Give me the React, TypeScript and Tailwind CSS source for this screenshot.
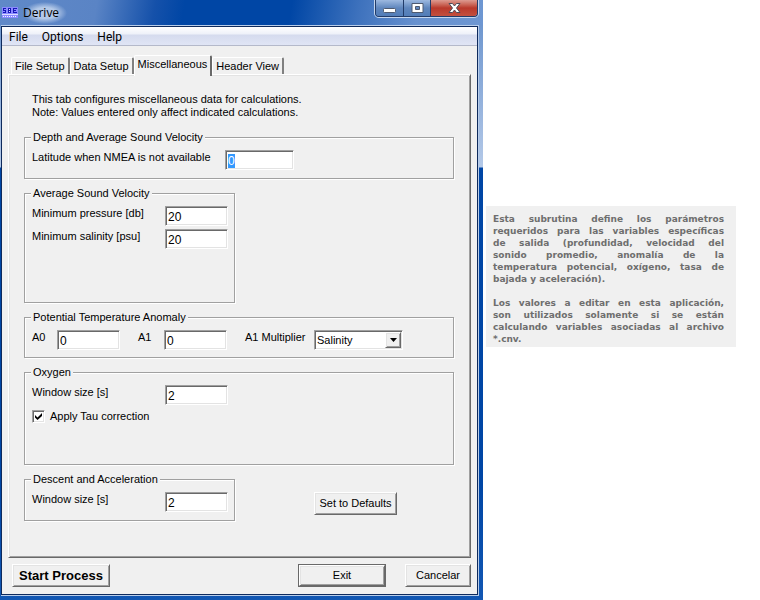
import { useEffect, useId, useRef } from "react";
import type { ReactNode } from "react";

const sunken =
  "rounded-none border border-t-[#a0a0a0] border-l-[#a0a0a0] border-r-white border-b-white shadow-[inset_1px_1px_0_#696969,inset_-1px_-1px_0_#e3e3e3]";
const raised =
  "border border-t-white border-l-white border-r-[#696969] border-b-[#696969] shadow-[inset_1px_1px_0_#e3e3e3,inset_-1px_-1px_0_#a0a0a0]";

function Group({ title, className, children }: { title: string; className: string; children: ReactNode }) {
  return (
    <fieldset
      className={`min-w-0 border border-[#a0a0a0] px-[7px] shadow-[1px_1px_0_#fff,inset_1px_1px_0_#fff] ${className}`}
    >
      <legend className="-ml-px bg-[#f0f0f0] px-0.5 leading-[13px]">{title}</legend>
      <div className="pt-1.5">{children}</div>
    </fieldset>
  );
}

function Field({ label, value, selected }: { label: string; value: string; selected?: boolean }) {
  const id = useId();
  const ref = useRef<HTMLInputElement>(null);
  useEffect(() => {
    if (selected) {
      ref.current?.focus();
      ref.current?.select();
    }
  }, [selected]);
  return (
    <>
      <label htmlFor={id} className="pt-px whitespace-nowrap">
        {label}
      </label>
      <input
        id={id}
        ref={ref}
        defaultValue={value}
        className={`h-5 w-full bg-white px-0.5 pt-0.5 text-[12px] leading-[13px] outline-none selection:bg-[#3399ff] selection:text-white ${sunken}`}
      />
    </>
  );
}

function Tab({ children, active }: { children: ReactNode; active?: boolean }) {
  return (
    <button
      role="tab"
      aria-selected={!!active}
      className={`rounded-t-[2px] border-t border-l border-white px-[3px] whitespace-nowrap ${
        active
          ? "relative z-10 -mb-0.5 h-[21px] border-r-2 border-r-[#696969] bg-[#f0f0f0] pb-1"
          : "h-[17px] border-r-2 border-r-[#808080]"
      }`}
    >
      {children}
    </button>
  );
}

function AppIcon() {
  return (
    <svg width="16" height="11" viewBox="0 0 16 11" shapeRendering="crispEdges" aria-hidden="true">
      <rect width="16" height="11" fill="#8a8aff" />
      <path d="M1 1h3v1H2v1h2v3H1V5h2V4H1zM6 1h3v5H6zM11 1h4v1h-3v1h2v1h-2v1h3v1h-4z" fill="#1717b5" />
      <path d="M7 2h1v1H7zM7 4h1v1H7zM0 7h16v1H0z" fill="#dcdcff" />
      <path d="M1 9h1v1H1zM3 9h1v1H3zM5 9h1v1H5zM7 9h1v1H7zM9 9h1v1H9zM11 9h1v1h-1zM13 9h1v1h-1z" fill="#f4f4ff" />
    </svg>
  );
}

function CaptionButtons() {
  const glass =
    "flex h-4 items-center justify-center bg-linear-to-b from-[#9db9e0] via-[#5f86bd] via-50% to-[#527db8]";
  return (
    <div className="flex h-[17px] self-start overflow-hidden rounded-b-[4px] border border-t-0 border-[#223b68] shadow-[0_1px_0_#c5d6ee,1px_0_0_#c5d6ee,-1px_0_0_#c5d6ee]">
      <button aria-label="Minimize" className={`w-7 border-r border-[#223b68] ${glass}`}>
        <svg width="13" height="14" viewBox="0 0 13 14" aria-hidden="true">
          <rect x="0.5" y="7.5" width="12" height="4" rx="1" fill="#fff" stroke="#4e5a70" />
        </svg>
      </button>
      <button aria-label="Maximize" className={`w-[27px] border-r border-[#223b68] ${glass}`}>
        <svg width="13" height="14" viewBox="0 0 13 14" aria-hidden="true">
          <path d="M1 2.500h11v9H1zM4.500 5.500v3h4v-3z" fillRule="evenodd" fill="#fff" stroke="#4e5a70" />
        </svg>
      </button>
      <button
        aria-label="Close"
        className="flex h-4 w-[46px] items-center justify-center bg-linear-to-b from-[#dc9a91] via-[#b9382b] via-50% to-[#c3503f]"
      >
        <svg width="13" height="14" viewBox="0 0 13 14" aria-hidden="true">
          <path d="M1 2.500h3.500l2 2.500 2-2.500H12L8.500 7l3.500 4.500H8.500l-2-2.500-2 2.500H1L4.500 7z" fill="#fff" stroke="#4e4a58" />
        </svg>
      </button>
    </div>
  );
}

function Lines({ lines, last }: { lines: string[]; last: string }) {
  return (
    <p>
      {lines.map((line) => (
        <span key={line} className="block whitespace-nowrap [text-align-last:justify]">
          {line}{" "}
        </span>
      ))}
      <span className="block">{last}</span>
    </p>
  );
}

function DeriveWindow() {
  return (
    <section className="w-full max-w-[483px] shrink-0 bg-[linear-gradient(100deg,#6089c8_0%,#5a84c5_20%,#1551aa_32%,#0046a5_38%,#0046a5_60%,#3e72bd_74%,#6791cf_86%,#6e97d2_100%)] bg-[length:100%_26px] bg-no-repeat">
      <header className="flex h-[25px] items-center justify-between pr-[5px] pl-0.5">
        <div className="flex items-center gap-[5px]">
          <AppIcon />
          <h1 className="bg-[radial-gradient(closest-side,#b4c9e8_50%,transparent)] pr-2 font-['Open_Sans',sans-serif] text-[12px] leading-[22px]">
            Derive
          </h1>
        </div>
        <CaptionButtons />
      </header>
      <div className="bg-[linear-gradient(#6f97cf_0,#b4c9e8_142px,#0046a5_143px,#0046a5_80%,#1257b3_100%)] pr-1 pb-1 pl-px">
        <div className="border-t border-r border-b border-[#b8cdea]">
          <div className="border border-[#0e2a5c] bg-[#f0f0f0]">
            <nav className="flex h-[19px] items-center gap-3.5 border-b border-[#b4b9ca] bg-[linear-gradient(#fff_0,#eef1f9_7px,#d5dbee_8px,#e0e5f5_100%)] px-[7px] pt-0.5 font-[Roboto,sans-serif] text-[12px] leading-4">
              <button>File</button>
              <button>Options</button>
              <button>Help</button>
            </nav>
            <div className="px-1.5 pt-[9px] pb-[7px]">
              <div role="tablist" className="flex items-end pl-[3px]">
                <Tab>File Setup</Tab>
                <Tab>Data Setup</Tab>
                <Tab active>Miscellaneous</Tab>
                <Tab>Header View</Tab>
              </div>
              <main className={`flex flex-col gap-2 pr-4 pl-[15px] pt-[18px] pb-[36px] ${raised}`}>
                <p className="mb-1 pl-2">
                  This tab configures miscellaneous data for calculations.
                  <br />
                  Note: Values entered only affect indicated calculations.
                </p>
                <Group title="Depth and Average Sound Velocity" className="min-h-12">
                  <div className="grid grid-cols-[193px_69px]">
                    <Field label="Latitude when NMEA is not available" value="0" selected />
                  </div>
                </Group>
                <Group title="Average Sound Velocity" className="min-h-[116px] w-[211px]">
                  <div className="grid grid-cols-[133px_63px] gap-y-[3px]">
                    <Field label="Minimum pressure [db]" value="20" />
                    <Field label="Minimum salinity [psu]" value="20" />
                  </div>
                </Group>
                <Group title="Potential Temperature Anomaly" className="min-h-[47px]">
                  <div className="flex gap-[18px]">
                    <div className="grid grid-cols-[25px_63px]">
                      <Field label="A0" value="0" />
                    </div>
                    <div className="grid grid-cols-[26px_63px]">
                      <Field label="A1" value="0" />
                    </div>
                    <div className="grid grid-cols-[69px_89px]">
                      <label htmlFor="multiplier" className="pt-px whitespace-nowrap">
                        A1 Multiplier
                      </label>
                      <div className="relative">
                        <select
                          id="multiplier"
                          className={`h-5 w-full appearance-none bg-white pl-0.5 outline-none ${sunken}`}
                        >
                          <option>Salinity</option>
                        </select>
                        <span
                          className={`pointer-events-none absolute top-0.5 right-0.5 flex h-4 w-4 items-center justify-center bg-[#f0f0f0] ${raised}`}
                        >
                          <svg width="7" height="4" viewBox="0 0 7 4" aria-hidden="true">
                            <path d="M0 0h7L3.500 4z" />
                          </svg>
                        </span>
                      </div>
                    </div>
                  </div>
                </Group>
                <Group title="Oxygen" className="min-h-[99px]">
                  <div className="grid grid-cols-[133px_63px]">
                    <Field label="Window size [s]" value="2" />
                  </div>
                  <label className="mt-[5px] flex items-center gap-[5px]">
                    <input
                      type="checkbox"
                      defaultChecked
                      className={`peer h-[13px] w-[13px] appearance-none bg-white ${sunken}`}
                    />
                    <svg
                      width="7"
                      height="7"
                      viewBox="0 0 7 7"
                      className="invisible mr-[3px] -ml-[15px] peer-checked:visible"
                      aria-hidden="true"
                    >
                      <path d="M0 2l2.500 2.500L7 0v3L2.500 7 0 4.500z" />
                    </svg>
                    Apply Tau correction
                  </label>
                </Group>
                <div className="flex items-end">
                  <Group title="Descent and Acceleration" className="min-h-12 w-[211px]">
                    <div className="grid grid-cols-[133px_63px]">
                      <Field label="Window size [s]" value="2" />
                    </div>
                  </Group>
                  <button className={`mb-1.5 ml-[79px] h-[23px] w-[83px] whitespace-nowrap ${raised}`}>
                    Set to Defaults
                  </button>
                </div>
              </main>
              <footer className="flex items-center pt-1.5 pl-1">
                <button
                  className={`mr-auto h-[23px] w-[98px] text-[13px] font-bold whitespace-nowrap ${raised}`}
                >
                  Start Process
                </button>
                <span className="mr-[19px] flex border border-[#696969]">
                  <button className={`h-[21px] w-[86px] ${raised}`}>Exit</button>
                </span>
                <button className={`h-[23px] w-[66px] ${raised}`}>Cancelar</button>
              </footer>
            </div>
          </div>
        </div>
      </div>
    </section>
  );
}

export default function App() {
  return (
    <div className="flex min-h-screen items-start gap-[3px] bg-white font-['Liberation_Sans',Arial,sans-serif] text-[11px] leading-[13px] text-black">
      <DeriveWindow />
      <aside className="mt-[206px] flex max-w-[250px] flex-1 flex-col gap-3 bg-[#f0f0f0] pt-[7px] pr-3 pb-0.5 pl-[7px] font-['DejaVu_Sans',Verdana,sans-serif] text-[9px] leading-3 font-bold text-[#6e6e6e]">
        <Lines
          lines={[
            "Esta subrutina define los parámetros",
            "requeridos para las variables específicas",
            "de salida (profundidad, velocidad del",
            "sonido promedio, anomalía de la",
            "temperatura potencial, oxígeno, tasa de",
          ]}
          last="bajada y aceleración)."
        />
        <Lines
          lines={[
            "Los valores a editar en esta aplicación,",
            "son utilizados solamente si se están",
            "calculando variables asociadas al archivo",
          ]}
          last="*.cnv."
        />
      </aside>
    </div>
  );
}
